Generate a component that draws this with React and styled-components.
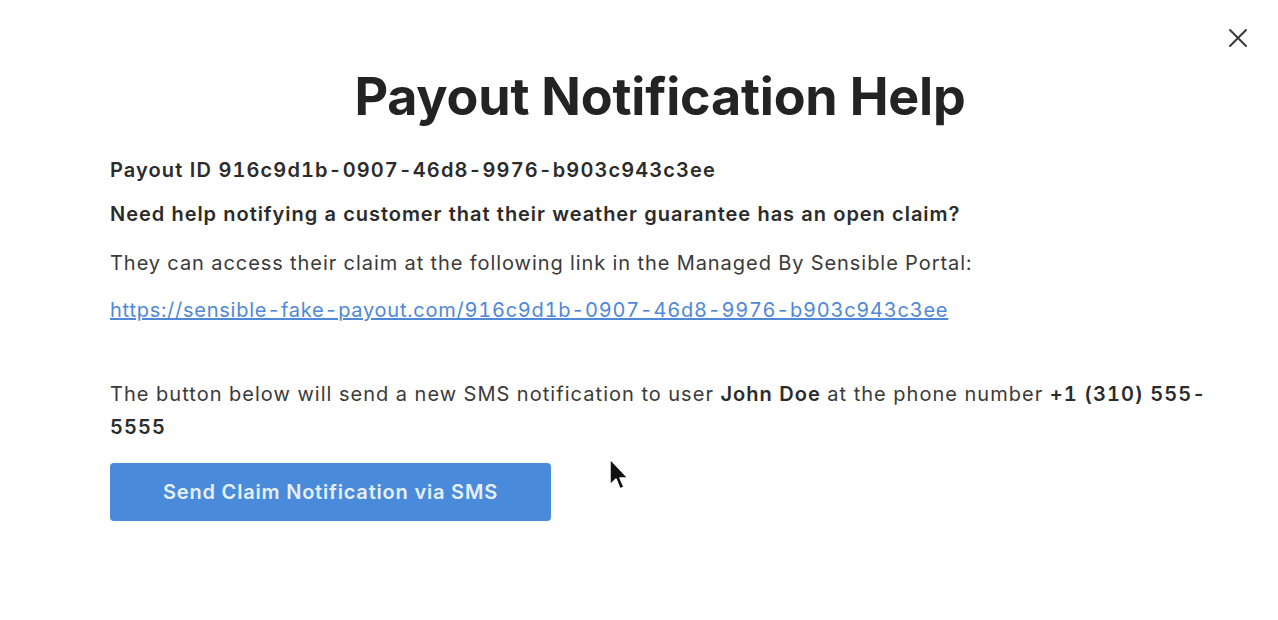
import React from 'react';
import styled, { createGlobalStyle } from 'styled-components';

const GlobalStyle = createGlobalStyle`
  html, body {
    margin: 0;
    background: #ffffff;
    font-family: Inter, "Noto Sans", sans-serif;
    color: #2a2a2a;
  }
`;

const Modal = styled.div`
  position: relative;
  width: 1278px;
  height: 620px;
  box-sizing: border-box;
  padding: 65px 68px 0 110px;
  background: #fff;
`;

const Close = styled.button`
  position: absolute;
  top: 26px;
  right: 28px;
  width: 24px;
  height: 24px;
  padding: 0;
  border: 0;
  background: none;
  color: #3a3a3a;
  cursor: pointer;
`;

const Title = styled.h1`
  margin: 0 0 28px;
  text-align: center;
  font-size: 52px;
  line-height: 64px;
  font-weight: 700;
  letter-spacing: -0.2px;
  color: #232323;
`;

const Line = styled.p`
  margin: 0 0 ${(p) => p.$gap || 20}px;
  font-size: 20px;
  line-height: ${(p) => p.$lh || 26}px;
  letter-spacing: ${(p) => p.$ls || 0.95}px;
  font-variant-numeric: tabular-nums;
  font-weight: ${(p) => (p.$bold ? 600 : 400)};
  color: ${(p) => (p.$bold ? '#2b2b2b' : '#3a3a3a')};
`;

const Link = styled.a`
  color: #4f88d6;
  text-decoration: underline;
`;

const Strong = styled.strong`
  font-weight: 600;
  color: #2b2b2b;
`;

const SendButton = styled.button`
  width: 441px;
  height: 58px;
  border: 0;
  border-radius: 4px;
  background: #4a8adb;
  color: #e6f0fc;
  font-family: Inter, "Noto Sans", sans-serif;
  font-size: 20px;
  letter-spacing: 0.8px;
  font-weight: 600;
  cursor: pointer;
`;

const Cursor = styled.svg`
  position: absolute;
  left: 608px;
  top: 457px;
`;

export default function App() {
  return (
    <>
      <GlobalStyle />
      <Modal>
        <Close aria-label="Close">
          <svg width="24" height="24" viewBox="0 0 24 24" fill="none" stroke="currentColor" strokeWidth="2" strokeLinecap="round">
            <path d="M4 4l16 16M20 4L4 20" />
          </svg>
        </Close>
        <Title>Payout Notification Help</Title>
        <Line $bold $gap={18} $ls={1.1}>Payout ID 916c9d1b-0907-46d8-9976-b903c943c3ee</Line>
        <Line $bold $gap={23}>Need help notifying a customer that their weather guarantee has an open claim?</Line>
        <Line $gap={21}>They can access their claim at the following link in the Managed By Sensible Portal:</Line>
        <Line $gap={55} $ls={0.75}>
          <Link href="#">https://sensible-fake-payout.com/916c9d1b-0907-46d8-9976-b903c943c3ee</Link>
        </Line>
        <Line $gap={19} $lh={33} $ls={1.05}>
          The button below will send a new SMS notification to user <Strong>John Doe</Strong> at the phone number <Strong>+1 (310) 555-5555</Strong>
        </Line>
        <SendButton>Send Claim Notification via SMS</SendButton>
        <Cursor width="24" height="36" viewBox="0 0 24 36">
          <path d="M2 2 L2 28 L8 22 L12 32 L16 30 L12 21 L20 21 Z" fill="#111" stroke="#fff" strokeWidth="1.5" strokeLinejoin="round" />
        </Cursor>
      </Modal>
    </>
  );
}
